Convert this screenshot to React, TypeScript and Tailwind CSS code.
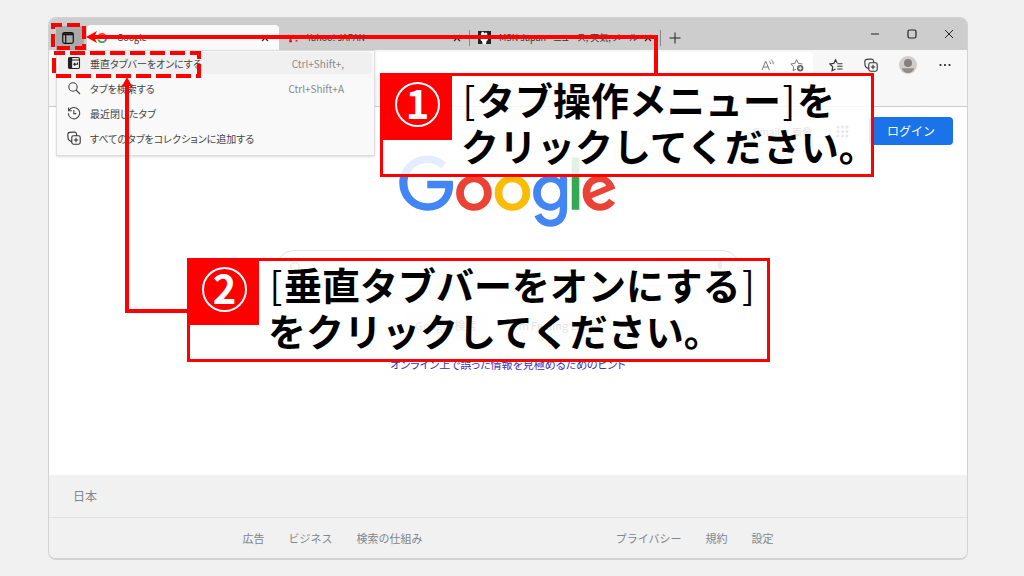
import type { ReactNode } from "react";

const menuItems = [
  { label: "垂直タブバーをオンにする", shortcut: "Ctrl+Shift+,", icon: <VerticalTabsIcon /> },
  { label: "タブを検索する", shortcut: "Ctrl+Shift+A", icon: <SearchIcon /> },
  { label: "最近閉じたタブ", shortcut: "", icon: <HistoryIcon /> },
  { label: "すべてのタブをコレクションに追加する", shortcut: "", icon: <CollectionsIcon /> },
];

function VerticalTabsIcon() {
  return (
    <svg viewBox="0 0 14 14" className="size-[14px]" fill="none" stroke="#222" strokeWidth="1.1">
      <rect x="1.5" y="1.5" width="11" height="11" rx="1.5" />
      <path d="M1.5 4h11" />
      <path d="M2 2h2.6v10H2z" fill="#222" />
      <path d="M10.5 6.5v1.7H6.8M8.2 6.8 6.8 8.2l1.4 1.4" />
    </svg>
  );
}

function SearchIcon() {
  return (
    <svg viewBox="0 0 14 14" className="size-[14px]" fill="none" stroke="#444" strokeWidth="1.1">
      <circle cx="6" cy="6" r="4.2" />
      <path d="m9 9 4 4" />
    </svg>
  );
}

function HistoryIcon() {
  return (
    <svg viewBox="0 0 14 14" className="size-[14px]" fill="none" stroke="#444" strokeWidth="1.1">
      <path d="M1.6 1.5v3.3h3.3" />
      <path d="M1.9 4.6a5.7 5.7 0 1 1-.6 2.6" />
      <path d="M6.8 4v3.6h2.6" />
    </svg>
  );
}

function CollectionsIcon() {
  return (
    <svg viewBox="0 0 14 14" className="size-[14px]" fill="none" stroke="#333" strokeWidth="1.1">
      <rect x="4.8" y="4.8" width="8.4" height="8.4" rx="1.6" />
      <path d="M9 6.8v4.4M6.8 9h4.4" />
      <path d="M4.8 10.6C2.6 10 1.2 8.800 1 7L.8 3.400C.8 2.200 1.500 1.500 2.600 1.400L7.400 1c1 0 1.700.4 2 1.300L9.700 4.800" />
    </svg>
  );
}

function ReadAloudIcon() {
  return (
    <svg viewBox="0 0 14 14" className="size-[14px]" fill="none" stroke="#777" strokeWidth="1">
      <path d="M1 12 4.700 3 8.400 12M2.300 9h4.800" />
      <path d="M8.500 3.200c.8.8 1.100 1.700 1.100 2.800M10.300 1.500c1.300 1.300 1.900 2.900 1.900 4.700" />
    </svg>
  );
}

function AddFavoriteIcon() {
  return (
    <svg viewBox="0 0 14 14" className="size-[14px]" fill="none" stroke="#777" strokeWidth="1">
      <path d="M6 11.200 3.100 12.700l.6-3.900L.8 6l4-.6L6.600 1.700l1.800 3.700 4 .6" />
      <circle cx="10.200" cy="10.200" r="3.200" fill="#666" stroke="none" />
      <path d="M10.200 8.500v3.400M8.500 10.200h3.400" stroke="#fff" />
    </svg>
  );
}

function FavoritesIcon() {
  return (
    <svg viewBox="0 0 14 14" className="size-[14px]" fill="none" stroke="#333" strokeWidth="1.1">
      <path d="M6.500 11 3 12.800l.7-4L.8 6l4-.6L6.500 1.700l1.600 3.400M8.200 5.700h5.300M8.200 8.300h5.300M8.200 11h5.300" />
    </svg>
  );
}

function Avatar() {
  return (
    <svg viewBox="0 0 18 18" className="size-[18px]">
      <circle cx="9" cy="9" r="9" fill="#d0cecc" />
      <circle cx="9" cy="7" r="4" fill="#84807d" />
      <path d="M2.800 12.300h12.400C14.500 15.500 12 17 9 17s-5.500-1.500-6.200-4.700z" fill="#918d8a" />
    </svg>
  );
}

function TabMenuIcon() {
  return (
    <svg viewBox="0 0 14 14" className="size-[14px]" fill="none" stroke="#111" strokeWidth="1.2">
      <rect x="1.700" y="1.700" width="10.600" height="10.600" rx="1.800" />
      <path d="M1.700 3.300h10.600" strokeWidth="2" />
      <path d="M4.700 4v8" />
    </svg>
  );
}

function CloseIcon() {
  return (
    <svg viewBox="0 0 8 8" className="size-2" stroke="#222" strokeWidth="1.100">
      <path d="m1 1 6 6M7 1 1 7" />
    </svg>
  );
}

function GoogleFavicon() {
  return (
    <svg viewBox="0 0 12 12" className="size-[10px] shrink-0" fill="none" strokeWidth="2.200">
      <path d="M9.800 2.700A5 5 0 0 0 1.700 3.600" stroke="#ea4335" />
      <path d="M1.700 3.600a5 5 0 0 0 0 4.800" stroke="#fbbc05" />
      <path d="M1.700 8.400a5 5 0 0 0 7.300 1.700" stroke="#34a853" />
      <path d="M9 10.100C10.400 9 11 7.700 11 6H6" stroke="#4285f4" />
    </svg>
  );
}

function YahooFavicon() {
  return (
    <svg viewBox="0 0 12 12" className="size-3 shrink-0" fill="none" stroke="#f03" strokeWidth="1.800">
      <path d="m1 3 2.500 3.500L6.500 3M3.500 6.500V9.500M2 9.300h3M9.500 3v3.800M9.500 8v1.600" />
    </svg>
  );
}

function MsnFavicon() {
  return (
    <svg viewBox="0 0 13 13" className="size-[13px] shrink-0">
      <rect width="13" height="13" fill="#20242a" />
      <path d="M4 1c1.500-.5 2 .5 2.500 1.500C7.500 1 9 1 9 2.500 9.300 4 10 5 9.500 6.500c1 1.500 0 3.500-1 3.500L8 13H4.500L4 10C2.500 10 2 8 3.200 6.500 2.500 5 3 2 4 1z" fill="#fff" />
    </svg>
  );
}

function GoogleLogo() {
  return (
    <svg viewBox="0 0 272 92" className="h-[74px] w-[218px]" role="img" aria-label="Google">
      <path fill="#EA4335" d="M115.75 47.18c0 12.77-9.99 22.18-22.25 22.18s-22.25-9.41-22.25-22.18C71.25 34.32 81.24 25 93.5 25s22.25 9.32 22.25 22.18zm-9.74 0c0-7.98-5.79-13.44-12.51-13.44S80.99 39.2 80.99 47.18c0 7.9 5.79 13.44 12.51 13.44s12.51-5.55 12.51-13.44z" />
      <path fill="#FBBC05" d="M163.75 47.18c0 12.77-9.99 22.18-22.25 22.18s-22.25-9.41-22.25-22.18c0-12.85 9.99-22.18 22.25-22.18s22.25 9.32 22.25 22.18zm-9.74 0c0-7.98-5.79-13.44-12.51-13.44s-12.51 5.46-12.51 13.44c0 7.9 5.79 13.44 12.51 13.44s12.51-5.55 12.51-13.44z" />
      <path fill="#4285F4" d="M209.75 26.34v39.82c0 16.38-9.66 23.07-21.08 23.07-10.75 0-17.22-7.19-19.66-13.07l8.48-3.53c1.51 3.61 5.21 7.87 11.17 7.87 7.31 0 11.84-4.51 11.84-13v-3.19h-.34c-2.18 2.69-6.38 5.04-11.68 5.04-11.09 0-21.25-9.66-21.25-22.09 0-12.52 10.16-22.26 21.25-22.26 5.29 0 9.49 2.35 11.68 4.96h.34v-3.61h9.25zm-8.56 20.92c0-7.81-5.21-13.52-11.84-13.52-6.72 0-12.35 5.71-12.35 13.52 0 7.73 5.63 13.36 12.35 13.36 6.63 0 11.84-5.63 11.84-13.36z" />
      <path fill="#34A853" d="M225 3v65h-9.5V3h9.5z" />
      <path fill="#EA4335" d="M262.02 54.48l7.56 5.04c-2.44 3.61-8.32 9.83-18.48 9.83-12.6 0-22.01-9.74-22.01-22.18 0-13.19 9.49-22.18 20.92-22.18 11.51 0 17.14 9.16 18.98 14.11l1.01 2.52-29.65 12.28c2.27 4.45 5.8 6.72 10.75 6.72 4.96 0 8.4-2.44 10.92-6.14zm-23.27-7.98l19.82-8.23c-1.09-2.77-4.37-4.7-8.23-4.7-4.95 0-11.84 4.37-11.59 12.93z" />
      <path fill="#4285F4" d="M35.29 41.41V32H67c.31 1.64.47 3.58.47 5.68 0 7.06-1.93 15.79-8.15 22.01-6.05 6.3-13.78 9.66-24.02 9.66C16.32 69.35.36 53.89.36 34.91.36 15.93 16.32.47 35.3.47c10.5 0 17.98 4.12 23.6 9.49l-6.64 6.64c-4.03-3.78-9.49-6.72-16.97-6.72-13.86 0-24.7 11.17-24.7 25.03 0 13.86 10.84 25.03 24.7 25.03 8.99 0 14.11-3.61 17.39-6.89 2.66-2.66 4.41-6.46 5.1-11.65l-22.49.01z" />
    </svg>
  );
}

function Tab({ icon, title, active }: { icon: ReactNode; title: string; active?: boolean }) {
  return (
    <div
      className={
        active
          ? "flex h-[25px] w-48 items-center gap-[10px] rounded-t bg-[#fafafa] px-[10px]"
          : "flex h-[25px] w-[190px] items-center gap-2 px-2"
      }
    >
      {icon}
      <span className="min-w-0 flex-1 whitespace-nowrap text-[9px] text-[#333] [font-feature-settings:'palt']">
        {title}
      </span>
      <button aria-label="タブを閉じる">
        <CloseIcon />
      </button>
    </div>
  );
}

function TabStrip() {
  return (
    <div className="flex h-8 items-end bg-[#cdcdcd] pl-[7px]">
      <button aria-label="タブ操作メニュー" className="flex h-6 w-7 items-center bg-[#aaa] pl-[5px]">
        <TabMenuIcon />
      </button>
      <div className="ml-[3px] flex items-end">
        <Tab active icon={<GoogleFavicon />} title="Google" />
        <Tab icon={<YahooFavicon />} title="Yahoo! JAPAN" />
        <span className="mb-1 h-4 w-px bg-[#888]" />
        <Tab icon={<MsnFavicon />} title="MSN Japan - ニュース, 天気, メール" />
        <span className="mb-1 h-4 w-px bg-[#888]" />
      </div>
      <button aria-label="新しいタブ" className="flex h-[25px] w-7 items-center justify-center">
        <svg viewBox="0 0 12 12" className="size-3" stroke="#222">
          <path d="M6 .5v11M.5 6h11" />
        </svg>
      </button>
      <div className="ml-auto flex self-stretch">
        <button aria-label="最小化" className="flex w-[37px] items-center justify-center">
          <svg viewBox="0 0 10 10" className="size-[10px]" stroke="#222">
            <path d="M1 5h8" />
          </svg>
        </button>
        <button aria-label="最大化" className="flex w-[37px] items-center justify-center">
          <svg viewBox="0 0 10 10" className="size-[10px]" fill="none" stroke="#222" strokeWidth="1.200">
            <rect x="1" y="1" width="8" height="8" rx="1.500" />
          </svg>
        </button>
        <button aria-label="閉じる" className="flex w-[37px] items-center justify-center">
          <svg viewBox="0 0 10 10" className="size-[10px]" stroke="#222">
            <path d="m1 1 8 8M9 1 1 9" />
          </svg>
        </button>
      </div>
    </div>
  );
}

function Toolbar() {
  return (
    <div className="flex h-[57px] items-start border-b border-[#ccc] bg-[#f7f7f7] pt-[2px]">
      <div className="flex h-[26px] flex-1 items-center justify-end gap-[15px] rounded bg-white pr-[9px]">
        <button aria-label="音声で読み上げる">
          <ReadAloudIcon />
        </button>
        <button aria-label="お気に入りに追加">
          <AddFavoriteIcon />
        </button>
      </div>
      <div className="flex h-[26px] items-center gap-[21px] pl-4 pr-[15px]">
        <button aria-label="お気に入り">
          <FavoritesIcon />
        </button>
        <button aria-label="コレクション">
          <CollectionsIcon />
        </button>
        <button aria-label="プロファイル">
          <Avatar />
        </button>
        <button aria-label="設定など">
          <svg viewBox="0 0 14 14" className="size-[14px]" fill="#222">
            <circle cx="2.500" cy="7" r="1.100" />
            <circle cx="7" cy="7" r="1.100" />
            <circle cx="11.500" cy="7" r="1.100" />
          </svg>
        </button>
      </div>
    </div>
  );
}

function TabMenu() {
  return (
    <div className="absolute left-[7px] top-8 flex h-[106px] w-[319px] flex-col gap-[3px] border border-[#ddd] bg-[#f9f9f9] px-[2px] pt-px shadow-sm">
      {menuItems.map((item, i) => (
        <button
          key={item.label}
          className={
            i === 0
              ? "flex h-[22px] items-center rounded-sm bg-[#f0f0f0] pl-2 pr-7 text-[10px] text-[#444]"
              : "flex h-[22px] items-center rounded-sm pl-2 pr-7 text-[10px] text-[#444]"
          }
        >
          {item.icon}
          <span className="ml-[9px] [font-feature-settings:'palt']">{item.label}</span>
          <span className="ml-auto text-[#888]">{item.shortcut}</span>
        </button>
      ))}
    </div>
  );
}

function SearchPage() {
  return (
    <main className="flex flex-1 flex-col items-center bg-white">
      <div className="flex w-full items-center justify-end pr-[14px] pt-[10px] text-[10px] text-[#333]">
        <a href="#gmail">Gmail</a>
        <a href="#images" className="ml-3">
          画像
        </a>
        <button aria-label="Google アプリ" className="ml-6">
          <svg viewBox="0 0 13 13" className="size-[13px]" fill="#5f6368">
            {[2, 6.5, 11].map((y) =>
              [2, 6.5, 11].map((x) => <circle key={`${x}-${y}`} cx={x} cy={y} r="1.500" />)
            )}
          </svg>
        </button>
        <button className="ml-5 h-7 w-[84px] rounded bg-[#1a73e8] text-xs text-white">ログイン</button>
      </div>
      <div className="mt-[10px]">
        <GoogleLogo />
      </div>
      <div className="mt-[21px] flex h-9 w-[464px] items-center rounded-full border border-[#e4e4e4] px-3">
        <SearchIcon />
        <input aria-label="検索" className="mx-2 min-w-0 flex-1 bg-transparent text-xs outline-none" />
        <svg viewBox="0 0 14 16" className="h-4 w-[14px]" fill="none" strokeWidth="1.500">
          <rect x="5" y="1" width="4" height="8" rx="2" fill="#4285f4" />
          <path d="M2.500 7.500c0 6 9 6 9 0" stroke="#fbbc05" />
          <path d="M7 12v3" stroke="#34a853" />
        </svg>
      </div>
      <div className="mt-[25px] flex gap-3 text-[11px] text-[#3c4043]">
        <button className="h-7 rounded bg-[#f8f9fa] px-3">Google 検索</button>
        <button className="h-7 rounded bg-[#f8f9fa] px-3">I'm Feeling Lucky</button>
      </div>
      <a href="#hint" className="mt-[18px] text-[11px] leading-[14px] text-[#3a2ebb] [font-feature-settings:'palt']">
        オンライン上で誤った情報を見極めるためのヒント
      </a>
    </main>
  );
}

function Footer() {
  return (
    <footer className="bg-[#f1f1f1] text-[#80868b]">
      <div className="flex h-[43px] items-center border-b border-[#e2e2e2] px-6 text-xs">日本</div>
      <div className="flex h-10 items-center justify-evenly text-[11px]">
        <div className="flex gap-6">
          <a href="#ads">広告</a>
          <a href="#business">ビジネス</a>
          <a href="#how">検索の仕組み</a>
        </div>
        <div className="flex gap-6">
          <a href="#privacy">プライバシー</a>
          <a href="#terms">規約</a>
          <a href="#settings">設定</a>
        </div>
      </div>
    </footer>
  );
}

function Callout({ step, children }: { step: number; children: ReactNode }) {
  return (
    <div className="flex h-[104px] items-start border-[3px] border-[#f00] bg-white/85">
      <div className="flex h-16 w-[69px] shrink-0 justify-center bg-[#f00] pt-[6px]">
        <span className="flex size-[45px] items-center justify-center rounded-full border-2 border-white pb-[6px] text-[40px] font-bold leading-[40px] text-white">
          {step}
        </span>
      </div>
      <p className="whitespace-nowrap pl-[9px] text-[38px] font-bold leading-[46px] text-black">{children}</p>
    </div>
  );
}

function Bracket({ children }: { children: string }) {
  return <span className="inline-block w-4 text-center font-normal">{children}</span>;
}

function Arrows() {
  return (
    <svg
      viewBox="0 0 1024 576"
      className="pointer-events-none absolute left-0 top-0 h-[576px] w-[1024px]"
      fill="none"
      stroke="#f00"
      strokeWidth="4"
    >
      <rect x="53" y="25" width="31" height="23" strokeDasharray="13 5" strokeDashoffset="4" />
      <rect x="54" y="53" width="145" height="23" strokeDasharray="15 5" strokeDashoffset="4" />
      <path d="M656 74V37H90" />
      <path d="M97 31 86 37l11 6-3-6z" fill="#f00" stroke="none" />
      <path d="M188 311h-61V82" />
      <path d="m121 88 6-11 6 11-6-3z" fill="#f00" stroke="none" />
    </svg>
  );
}

export default function App() {
  return (
    <div className="relative flex min-h-screen flex-col overflow-hidden bg-[#f1f1f1] pb-4 pl-12 pr-14 pt-[17px] font-['Noto_Sans_CJK_JP',sans-serif]">
      <div className="relative flex flex-1 flex-col overflow-hidden rounded-lg border border-b-2 border-[#d2d2d2]">
        <TabStrip />
        <Toolbar />
        <SearchPage />
        <Footer />
        <TabMenu />
      </div>

      <Arrows />
      <div className="absolute left-[380px] top-[73px] w-[494px]">
        <Callout step={1}>
          <Bracket>[</Bracket>タブ操作メニュー<Bracket>]</Bracket>を
          <br />
          クリックしてください。
        </Callout>
      </div>
      <div className="absolute left-[187px] top-[258px] w-[583px]">
        <Callout step={2}>
          <Bracket>[</Bracket>垂直タブバーをオンにする<Bracket>]</Bracket>
          <br />
          をクリックしてください。
        </Callout>
      </div>
    </div>
  );
}
